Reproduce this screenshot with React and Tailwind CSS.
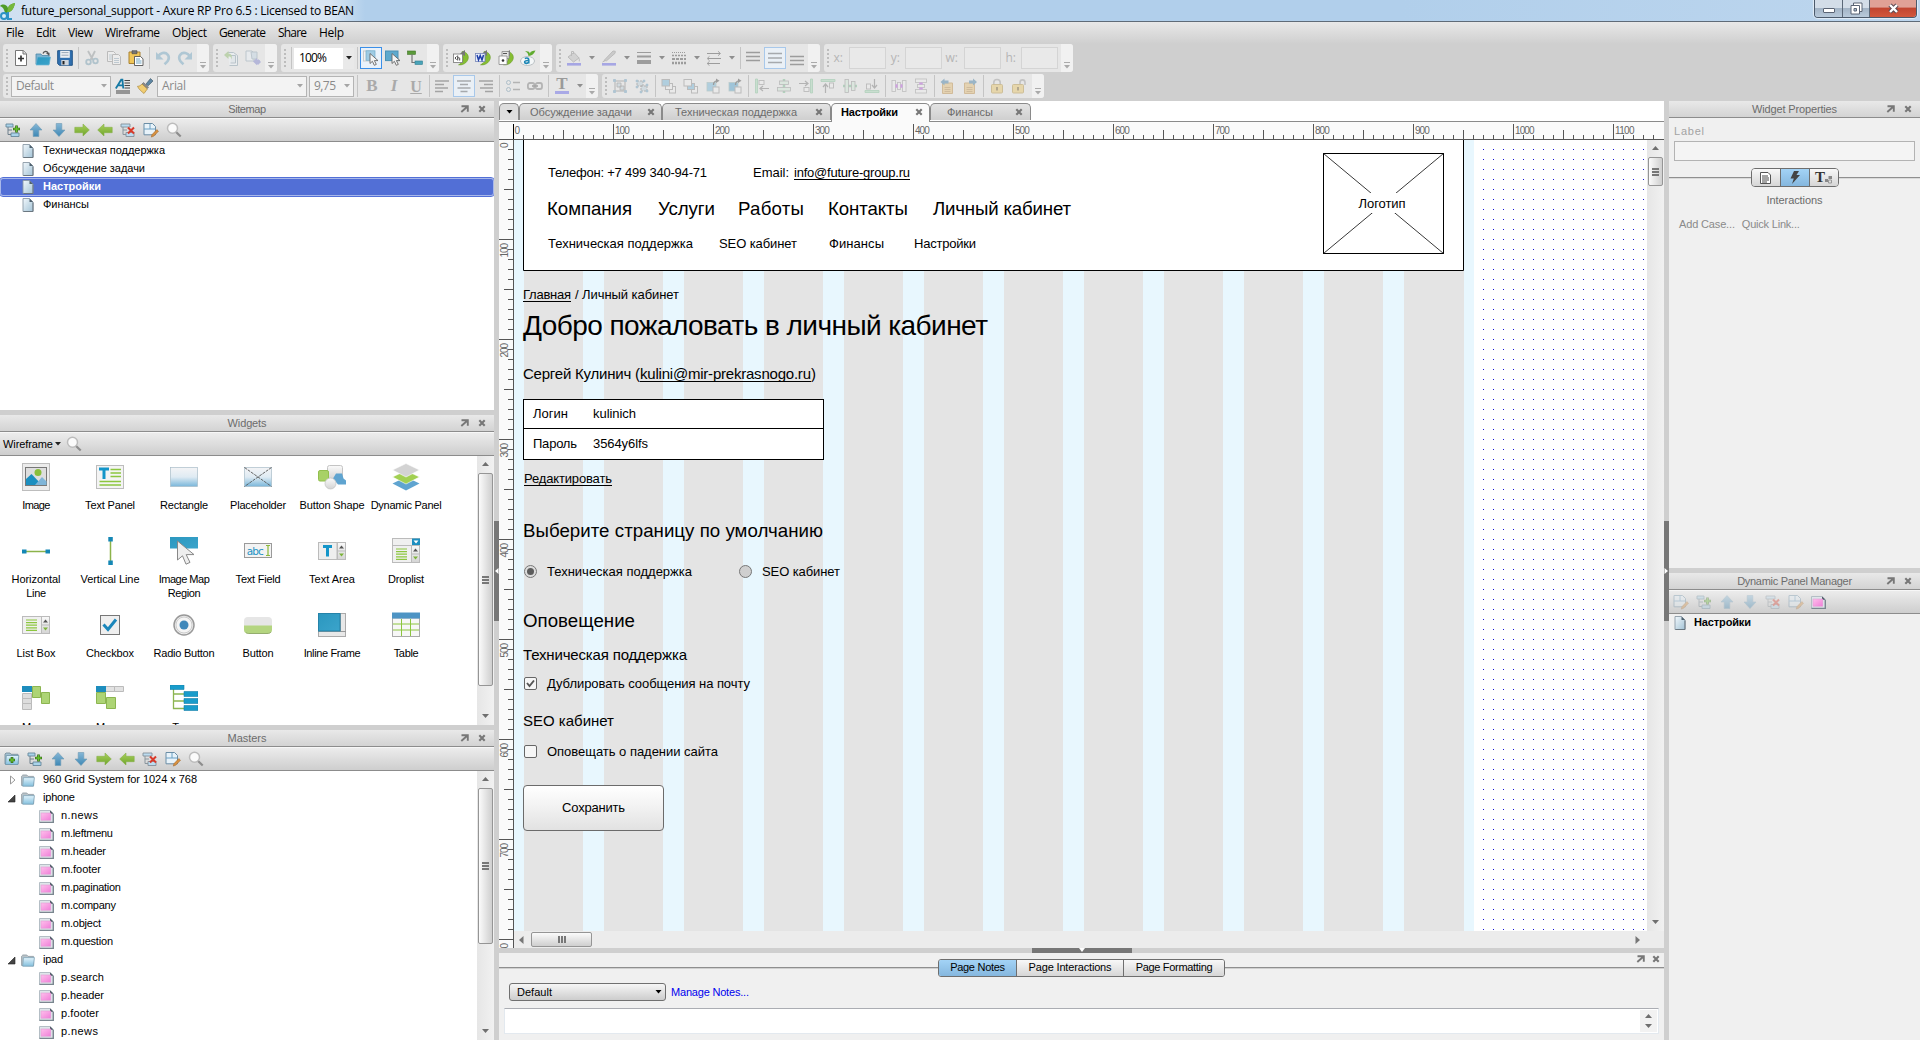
import React, { useLayoutEffect, useRef, useState } from "react";

/* Text whose tracking is adjusted so that it occupies a given width. */
function F({ w, className = "", children }) {
  const ref = useRef(null);
  const [ls, setLs] = useState(0);
  useLayoutEffect(() => {
    const el = ref.current;
    const n = el.textContent.length;
    if (w && n > 1) setLs((w - el.getBoundingClientRect().width) / (n - 1));
  }, []);
  return (
    <span ref={ref} className={"inline-block whitespace-pre " + className} style={{ letterSpacing: ls + "px" }}>
      {children}
    </span>
  );
}

const S = ({ w = 16, h = 16, vb, className = "", children }) => (
  <svg width={w} height={h} viewBox={vb || `0 0 ${w} ${h}`} className={"block shrink-0 " + className} fill="none">
    {children}
  </svg>
);

/* ---------- small glyphs ---------- */
const Down = ({ c = "#222", w = 6 }) => (
  <S w={w} h={4} vb="0 0 6 4"><path d="M0 0h6L3 3.6z" fill={c} /></S>
);
const CloseX = () => (
  <S w={8} h={8}><path d="M1.3 1.3l5.4 5.4M6.7 1.3L1.3 6.7" stroke="#777" strokeWidth="2.1" /></S>
);
const PopOut = () => (
  <S w={9} h={8}><path d="M1.5 1.2h6.3v5.6M7.5 1.5L1.3 7" stroke="#777" strokeWidth="1.9" /></S>
);

/* ---------- shared icons ---------- */
const Defs = () => (
  <svg width="0" height="0" className="absolute">
    <defs>
      <linearGradient id="gBlue" x1="0" y1="0" x2="0" y2="1"><stop offset="0" stopColor="#86b7d6" /><stop offset="1" stopColor="#3e88b5" /></linearGradient>
      <linearGradient id="gGreen" x1="0" y1="0" x2="0" y2="1"><stop offset="0" stopColor="#a9d05c" /><stop offset="1" stopColor="#6fa52c" /></linearGradient>
      <linearGradient id="gPage" x1="0" y1="0" x2="1" y2="1"><stop offset="0" stopColor="#f2f8fc" /><stop offset="1" stopColor="#a3c3d6" /></linearGradient>
      <linearGradient id="gFold" x1="0" y1="0" x2="0" y2="1"><stop offset="0" stopColor="#e2f3fb" /><stop offset="1" stopColor="#84c0de" /></linearGradient>
      <linearGradient id="gPink" x1="0" y1="0" x2="1" y2="1"><stop offset="0" stopColor="#ffc0ec" /><stop offset="1" stopColor="#f07fd8" /></linearGradient>
      <linearGradient id="gRect" x1="0" y1="0" x2="0" y2="1"><stop offset="0" stopColor="#f4f4f6" /><stop offset=".5" stopColor="#dfebf3" /><stop offset="1" stopColor="#79b6da" /></linearGradient>
      <linearGradient id="gGray" x1="0" y1="0" x2="0" y2="1"><stop offset="0" stopColor="#fafafa" /><stop offset="1" stopColor="#d4d4d4" /></linearGradient>
      <linearGradient id="gCyan" x1="0" y1="0" x2="1" y2="1"><stop offset="0" stopColor="#2b97bf" /><stop offset="1" stopColor="#3ba4cb" /></linearGradient>
    </defs>
  </svg>
);
const Page = () => (
  <S w={12} h={14}><path d="M1 .5h6.5l3.5 3.5v9.5H1z" fill="url(#gPage)" stroke="#8b9aa6" strokeWidth=".9" /><path d="M7.5 .5V4H11z" fill="#50626f" /><path d="M11 4.5v9H1.5" stroke="#6b7780" /></S>
);
const Master = () => (
  <S w={15} h={13}><path d="M.5 .5h10.7l3.2 3v9H.5z" fill="#dfe6ea" stroke="#b4bec5" /><path d="M11 .5v3.2h3.5z" fill="#44525c" /><path d="M14.3 4v8.5H.5" stroke="#7b8790" strokeWidth="1.4" /><rect x="2" y="3" width="9.8" height="7.2" fill="url(#gPink)" stroke="#e29bd4" strokeWidth=".6" /></S>
);
const Folder = () => (
  <S w={14} h={13}><path d="M.6 11.5V2.2L1.8 1h4l1.2 1.4h5.6v9.4z" fill="#b9c3c9" stroke="#949fa6" strokeWidth=".9" /><path d="M2.4 3.6h11l-1 8.6H1.7z" fill="url(#gFold)" stroke="#7fa3b6" strokeWidth=".8" /></S>
);
const AddNode = () => (
  <S><path d="M1 2h7v3H1zM6 11h8v3.5H6z" fill="#a9d3ea" stroke="#66889c" strokeWidth=".9" /><path d="M3 5v7.5h3M3 8h4" stroke="#6d7f8b" /><path d="M11.5 3.5v7M8 7h7" stroke="#2c5f12" strokeWidth="2.6" /><path d="M11.5 4v6M8.5 7h6" stroke="#66c12c" strokeWidth="1.3" /></S>
);
const DelNode = () => (
  <S><path d="M1 2h9v3H1zM6 10.5h8v4H6z" fill="#bcdcf0" stroke="#84909a" strokeWidth=".9" /><path d="M3 5v7.5h3M3 8h4" stroke="#8a959d" /><path d="M8 5.5l6 6M14 5.5l-6 6" stroke="#d93a2a" strokeWidth="2" /></S>
);
const AddFolder = () => (
  <S><path d="M1 3l1-1h4l1 1.3h7V13H1z" fill="#a5c2d2" stroke="#7b919e" strokeWidth=".9" /><path d="M2.3 4.5h12.5L14 13.5H1.5z" fill="url(#gFold)" stroke="#6f94a8" strokeWidth=".8" /><path d="M8 6v6M5 9h6" stroke="#2c5f12" strokeWidth="2.6" /><path d="M8 6.5v5M5.5 9h5" stroke="#66c12c" strokeWidth="1.3" /></S>
);
const Up = () => <S><path d="M8 1.5L14 8h-3.2v6.5H5.2V8H2z" fill="url(#gBlue)" stroke="#6e9bb4" strokeWidth=".6" /></S>;
const Dn = () => <S><path d="M8 14.5L14 8h-3.2V1.5H5.2V8H2z" fill="url(#gBlue)" stroke="#6e9bb4" strokeWidth=".6" /></S>;
const Rt = () => <S><path d="M15.3 8L9 2v3.3H.8v5.4H9V14z" fill="url(#gGreen)" stroke="#86b04a" strokeWidth=".6" /></S>;
const Lt = () => <S><path d="M.7 8L7 2v3.3h8.2v5.4H7V14z" fill="url(#gGreen)" stroke="#86b04a" strokeWidth=".6" /></S>;
const EditPg = () => (
  <S><path d="M1 1.5h8.5l3 3v8.3H1z" fill="#e8f3fa" stroke="#6b8ea6" /><path d="M1 7h11M7 2v5" stroke="#6ba0c4" /><path d="M9 12.6l4.8-5 1.7 1.6-4.8 5-2.4.9z" fill="#d89242" stroke="#9b5e22" strokeWidth=".5" /></S>
);
const Search = () => (
  <S><circle cx="6.5" cy="6.3" r="5" fill="#fbfbfb" stroke="#bcbcbc" strokeWidth="1.5" /><path d="M10.3 10.2l4.4 4.3" stroke="#8d8d8d" strokeWidth="2.2" /></S>
);

/* ---------- toolbar icons ---------- */
const New = () => <S><path d="M2.5 .5h7.8l3.2 3.2v11.8h-11z" fill="#fff" stroke="#777" /><path d="M10 .5v3.5h3.5" stroke="#777" fill="#ddd" /><path d="M8 5.5v6M5 8.5h6" stroke="#333" strokeWidth="1.7" /></S>;
const Open = () => <S><path d="M1 14V4h5l1 1.5h7V14z" fill="#7fb3d0" stroke="#4d88a8" strokeWidth=".8" /><path d="M2.5 7h13L14 15H1z" fill="url(#gCyan)" stroke="#6db4d4" strokeWidth=".7" /><path d="M8 3.4C9 1 12 .6 13 3" stroke="#555" strokeWidth="1.3" /><path d="M10.5 2.7h4V6z" fill="#555" /></S>;
const Save = () => <S><path d="M.7 .7h14.6v14.6H2.4L.7 13.6z" fill="#3070b0" stroke="#235588" /><path d="M3.2 .8h9.6v7H3.2z" fill="#eef0f3" /><path d="M4.5 2.6h7M4.5 5.2h7" stroke="#9aa8b8" /><path d="M4.3 10h7.4v5.2H4.3z" fill="#cfd5dc" /><path d="M5.5 11h2v3.4h-2z" fill="#222" /></S>;
const Cut = () => <S><path d="M4 1l5 9M11 1L6.5 10" stroke="#8c9396" strokeWidth="1.8" /><circle cx="4.5" cy="12" r="2.3" stroke="#7199ad" strokeWidth="1.8" /><circle cx="11.5" cy="11" r="2.3" stroke="#7199ad" strokeWidth="1.8" /></S>;
const Copy = () => <S><path d="M1.5 1.5h6l2 2v8h-8z" fill="#f5f5f5" stroke="#888" /><path d="M6.5 4.5h6l2 2v8h-8z" fill="#f5f5f5" stroke="#888" /><path d="M8 8.5h5M8 10.5h5M8 12.5h5M3 5h3M3 7h3M3 9h3" stroke="#8fa8b8" /></S>;
const Paste = () => <S><path d="M1 2h11v11.5H1z" fill="#f0c659" stroke="#a98232" /><path d="M4 .7h5v3H4z" fill="#777" stroke="#444" strokeWidth=".6" /><path d="M6.5 6.5h6l2.5 2.3v6.7H6.5z" fill="#fff" stroke="#555" strokeWidth=".9" /><path d="M8 9h4M8 11h5.5M8 13h5.5" stroke="#6fa6c4" /></S>;
const Undo = () => <S><path d="M3 7C5 2.8 10 1.4 12.8 4.8c2.2 3 .4 6.4-3.3 9.4" stroke="#6da2bf" strokeWidth="2.6" /><path d="M1 2v7.5h7.5z" fill="#6da2bf" /></S>;
const Redo = () => <S className="-scale-x-100"><path d="M3 7C5 2.8 10 1.4 12.8 4.8c2.2 3 .4 6.4-3.3 9.4" stroke="#6da2bf" strokeWidth="2.6" /><path d="M1 2v7.5h7.5z" fill="#6da2bf" /></S>;
const PageUndo = () => <S><path d="M4.5 2.5h6l4 3v10h-8" fill="#eef4f8" stroke="#8299a8" /><path d="M8 5.5h4.5v7.5h-5" fill="#dbe6ee" stroke="#8299a8" /><path d="M1 5l4.5-4v2.4C9 3.6 9.6 7 8 9.5 8.3 6.7 7.6 6.4 5.5 6.4V9z" fill="#8dba6b" /></S>;
const PageOut = () => <S><path d="M1 1h6l2 2v8H1z" fill="#eaf1f6" stroke="#8aa0b0" /><path d="M6 2h6v7H7z" fill="#bfd3e3" stroke="#8aa0b0" /><path d="M8 11.5l4-3.6v2.3h3v2.7h-3v2.3z" fill="#7a7fca" /><path d="M10 12l3 3 3-3-3-3z" fill="#7c80cb" /></S>;
const Cursor = ({ x = 0, y = 0 }) => <path transform={`translate(${x} ${y})`} d="M0 0v10l2.4-2.2 1.9 4 2-.9-1.9-3.8H8z" fill="#f5f5f5" stroke="#666" strokeWidth=".9" />;
const SelA = () => <S><rect x=".5" y="1" width="7" height="10" fill="#f2f2f2" stroke="#ccc" /><rect x="3" y=".8" width="9" height="9.5" fill="#9fcbe3" stroke="#6fabca" strokeWidth=".7" /><Cursor x={7} y={3.5} /></S>;
const SelB = () => <S><rect x=".5" y="1" width="12.5" height="9.6" fill="#5ea9cd" stroke="#4a92b6" /><Cursor x={7} y={3.5} /></S>;
const Conn = () => <S><rect x=".5" y="1" width="8" height="3.4" fill="#5b9a3a" stroke="#417426" strokeWidth=".6" /><path d="M5 4.6v7.9h3" stroke="#777" strokeWidth="1.2" /><rect x="8" y="11" width="7.5" height="3.5" fill="#4aa3b8" stroke="#2f7f92" strokeWidth=".6" /></S>;
const GreenSwirl = () => <><path d="M9 1.500c6 .5 7.500 5.500 5.500 9C12.500 14 9 15.300 5.500 14.800 9.500 13 11 10 9.500 6z" fill="#86bd33" stroke="#5c9319" strokeWidth=".5" /><path d="M7 3.500L12 0v6z" fill="#777" /></>;
const Html = () => <S><GreenSwirl /><rect x=".5" y="4" width="9" height="8.5" fill="#fff" stroke="#777" strokeWidth=".8" /><path d="M3.500 6.500L2 8l1.500 1.700M4.700 5.500v5M4.700 8.300c1-1 2-.8 2 .3v1.900" stroke="#333" strokeWidth=".9" /></S>;
const Word = () => <S><GreenSwirl /><rect x=".5" y="3.500" width="9.500" height="8" fill="#e9eefb" stroke="#7586b8" strokeWidth=".8" /><path d="M2 5l1.500 5 1.700-4.500L7 10 8.500 5" stroke="#1f3fa8" strokeWidth="1.500" /></S>;
const Print = () => <S><GreenSwirl /><path d="M4 1.500h7v7H4z" fill="#e5e5e5" stroke="#888" strokeWidth=".8" /><path d="M1 6h8v8.500H1z" fill="#fdfdfd" stroke="#888" strokeWidth=".8" /><circle cx="5" cy="10.500" r="1.300" fill="#333" /><path d="M5 3.500h4" stroke="#555" /></S>;
const AxShare = () => <S><ellipse cx="7.500" cy="11" rx="7" ry="4.500" fill="#f4f7f8" stroke="#a4acb0" strokeWidth=".7" /><path d="M8.500 6C8 3 6.800 2 5 1.600 8 .8 9.400 2 9.800 3.400 10.600 1.400 12.800.6 15.500.5 14 4 12 5.800 8.500 6z" fill="#5fab2e" /><path d="M4.800 8.400c3-1 4 .2 4 1.600V13.400M8.800 10.600c-2.600-.2-4.300.4-4.200 1.600.2 1.600 3.200 1.500 4.200-.2" stroke="#1c86b5" strokeWidth="1.600" /></S>;
const Bucket = () => <S><path d="M2 7l6-4.500L13 8l-5.500 4z" fill="#bbb" stroke="#888" /><path d="M5.500 6V1.500h2V4" stroke="#888" /><path d="M13 7c1 2 1.500 3.500.6 4.500-.8.3-1-.5-.9-2z" fill="#999" /><rect x="1" y="13" width="14" height="2.600" fill="#5a5ae0" /></S>;
const Pen = () => <S><path d="M3 10.500L12 1l2.300.3-.3 2-8.500 7.500z" fill="#aaa" stroke="#888" /><path d="M1.500 12l3-1.500" stroke="#888" /><rect x="1" y="13" width="14" height="2.600" fill="#5a5ae0" /></S>;
const Weights = () => <S><path d="M1 2.500h14" stroke="#444" /><path d="M1 6.500h14" stroke="#444" strokeWidth="2" /><path d="M1 12h14" stroke="#444" strokeWidth="4" /></S>;
const Dashes = () => <S><path d="M1 2.500h14" stroke="#444" strokeDasharray="1 1" /><path d="M1 5.500h14" stroke="#444" strokeWidth="1.500" strokeDasharray="2 1" /><path d="M1 9h14" stroke="#444" strokeWidth="2" strokeDasharray="3 1" /><path d="M1 13h14" stroke="#444" strokeWidth="2.500" strokeDasharray="2 1" /></S>;
const Arrows = () => <S><path d="M1 3.500h13M2 8.500h13M1 13.500h13" stroke="#444" /><path d="M3.500 6.300L1.200 8.500l2.300 2.200M12 1.300l2.500 2.200L12 5.700M3.500 11.300l-2.300 2.200 2.300 2.200" stroke="#555" /></S>;
const VTop = () => <S><path d="M1 2.500h14M1 6.500h14M1 10.500h14" stroke="#444" strokeWidth="1.400" /></S>;
const VMid = () => <S><path d="M1 3.500h14M1 8h14M1 12.500h14" stroke="#555" strokeWidth="1.400" /></S>;
const VBot = () => <S><path d="M1 6.500h14M1 10.500h14M1 14.500h14" stroke="#444" strokeWidth="1.400" /></S>;
const StyleA = () => <S><path d="M9.500 2.500H15M9.500 5H15M9.500 7.500H15M9.500 10H15M1 13h14M1 15h14" stroke="#444" /><path d="M.8 10.500L6.200 1.700h1.200l.9 8.800M3 7.300h4.800" stroke="#1679a4" strokeWidth="1.800" /></S>;
const Brush = () => <S><path d="M9 6l4.500-5.500L16 3l-4.800 4.800z" fill="#5e86a3" stroke="#3c5563" strokeWidth=".6" /><path d="M6.500 4.500l5 4.700-1.400 1.600L5 6z" fill="#8b8b8b" stroke="#555" strokeWidth=".5" /><path d="M5 6l5.300 5L7 15.500C4.500 13.500 1.500 11 .5 8.300 2.300 8.300 3.800 7.400 5 6z" fill="#f1cd72" stroke="#a57f2c" strokeWidth=".6" /></S>;
const AlL = () => <S><path d="M1 3h14M1 6.500h9M1 10h13M1 13.500h8" stroke="#555" strokeWidth="1.500" /></S>;
const AlC = () => <S><path d="M1 3h14M4 6.500h8M1.500 10h13M4.500 13.500h7" stroke="#555" strokeWidth="1.500" /></S>;
const AlR = () => <S><path d="M1 3h14M6 6.500h9M2 10h13M7 13.500h8" stroke="#555" strokeWidth="1.500" /></S>;
const List = () => <S><circle cx="3.500" cy="4.500" r="2" stroke="#6b8fa6" /><circle cx="3.500" cy="11.500" r="2" stroke="#6b8fa6" /><path d="M8 4.500h7M8 11.500h7" stroke="#777" strokeWidth="1.300" /></S>;
const Link = () => <S><rect x=".9" y="5" width="6.500" height="6" rx="2" stroke="#777" strokeWidth="1.800" /><rect x="8.500" y="5" width="6.500" height="6" rx="2" stroke="#777" strokeWidth="1.800" /><path d="M5 8h6" stroke="#555" strokeWidth="1.600" /></S>;
const Group = () => <S><path d="M3 3h10v10H3z" stroke="#777" /><path d="M5 5h4v4H5zM8 8h4v4H8z" fill="#b9cdd8" stroke="#777" strokeWidth=".8" /><path d="M1.500 1.500h2v2h-2zM12.500 1.500h2v2h-2zM1.500 12.500h2v2h-2zM12.500 12.500h2v2h-2z" fill="#6f9fbb" stroke="#6f9fbb" /></S>;
const Ungroup = () => <S><path d="M3 3h6v5H3zM7 8h6v5H7z" fill="#b9cdd8" stroke="#777" strokeDasharray="2 1" /><path d="M2 2h2v2H2zM9 2h2v2H9zM2 8h2v2H2zM12 6h2v2h-2zM12 12h2v2h-2zM6 13h2v2H6z" fill="#6f9fbb" stroke="#6f9fbb" strokeWidth=".5" /></S>;
const Stack = ({ a = "#6fb3d6", b = "#eee", c = "#eee" }) => <S><rect x="8.500" y="8.500" width="6" height="6.500" fill={c} stroke="#888" /><rect x="4.500" y="5.500" width="7" height="6" fill={b} stroke="#888" /><rect x="1" y="1.500" width="7.500" height="6.500" fill={a} stroke="#888" /></S>;
const StackArrow = ({ f }) => <S><rect x="2" y="4.500" width="9" height="8.500" fill={f} stroke="#8aa" strokeWidth=".8" /><rect x="8" y="9" width="6" height="6" fill="#eee" stroke="#888" /><path d="M8.500 7c0-3 1-4 3.500-4.200" stroke="#444" strokeWidth="1.300" /><path d="M11 .5l3.500 2.300L11 5z" fill="#444" /></S>;
const AlignO = ({ r = 0, m = 0 }) => (
  <S><g transform={`rotate(${r} 8 8)`}>{m ? <><path d="M8 1v14" stroke="#74b98c" strokeWidth="2.500" /><rect x="3.500" y="3" width="9" height="3.500" fill="#cfe6d6" stroke="#888" strokeWidth=".8" /><rect x="1.500" y="9.500" width="13" height="3.500" fill="#cfe6d6" stroke="#888" strokeWidth=".8" /></> : <><path d="M1.500 1h2v14h-2z" fill="#a7d6b5" stroke="#74b98c" strokeWidth=".8" /><rect x="5" y="2.500" width="5" height="4" fill="#eee" stroke="#888" strokeWidth=".9" /><path d="M15 10.500H6M9 8l-3 2.500L9 13" stroke="#777" strokeWidth="1.200" /></>}</g></S>
);
const Dist = ({ r = 0 }) => <S><g transform={`rotate(${r} 8 8)`}><rect x="1" y="2.500" width="3.500" height="11" fill="#eee" stroke="#999" strokeWidth=".9" /><rect x="6.500" y="4.500" width="3" height="7" fill="#eee" stroke="#999" strokeWidth=".9" /><rect x="11.500" y="2.500" width="3.500" height="11" fill="#eee" stroke="#999" strokeWidth=".9" /><path d="M4.500 8h2M9.500 8h2" stroke="#b34ddb" strokeWidth="3.500" /></g></S>;
const Note = ({ flip }) => <S><path d="M2.500 5h10v10.500h-10z" fill="#e3bb72" stroke="#b8893f" /><path d="M4.500 9.500h6M4.500 11.500h6M4.500 13.500h6" stroke="#a87c3a" strokeWidth=".8" />{flip ? <path d="M15 4L11 .5v2H7v3h4v2z" fill="#3f7ba3" /> : <path d="M.5 4l4-3.500v2h4v3h-4v2z" fill="#3f7ba3" />}</S>;
const Lock = ({ o }) => <S>{o ? <path d="M9 7V4.500c0-3.500 5-3.500 5 0V7" stroke="#999" strokeWidth="1.600" /> : <path d="M4.800 7V4.500c0-4 6.400-4 6.400 0V7" stroke="#999" strokeWidth="1.600" />}<rect x={o ? 1.5 : 2.5} y="6.500" width="11" height="8.500" rx="1" fill="#e8c465" stroke="#b18f3c" /><path d={o ? "M7 9v3.500" : "M8 9v3.500"} stroke="#6a5421" strokeWidth="1.800" /></S>;

/* ---------- toolbar parts ---------- */
const Bar = ({ children }) => <div className="flex h-full items-center rounded-[3px] bg-[#e6e6e6]">{children}</div>;
const Grip = () => (
  <div className="flex h-full w-[7px] shrink-0 flex-col items-end justify-center gap-[2px] pr-[2px]">
    {[0, 1, 2, 3, 4].map((i) => <i key={i} className="h-[2px] w-[2px] bg-[#bdbdbd]" />)}
  </div>
);
const Cap = ({ className = "" }) => (
  <div className={"flex h-full w-3 shrink-0 flex-col items-center justify-end gap-[2px] rounded-r-[3px] bg-[#f1f1f1] pb-[3px] " + className}>
    <i className="h-px w-[6px] bg-[#aaa]" />
    <Down c="#aaa" />
  </div>
);
const C = ({ dis, sel, children, className = "" }) => (
  <div className={"flex h-[22px] w-[22px] shrink-0 items-center justify-center " + (sel === 1 ? "border border-[#3b8fe8] bg-[#e9f2fb] " : sel === 2 ? "border border-[#a8c8ea] bg-[#eaf0f6] " : "") + className}>
    <div className={dis ? "opacity-45" : ""}>{children}</div>
  </div>
);
const Sep = ({ className = "w-[5px]" }) => (
  <div className={"flex h-[22px] shrink-0 justify-center " + className}><i className="h-full w-px bg-[#c4c4c4]" /></div>
);
const SplitBtn = ({ children }) => (
  <div className="flex w-[35px] shrink-0 items-center"><C dis>{children}</C><div className="flex w-[13px] justify-center opacity-60"><Down c="#555" /></div></div>
);
const Combo = ({ className, w, children }) => (
  <div className={"flex h-[21px] shrink-0 items-center justify-between border border-[#b4b4b4] bg-[#f3f3f3] pl-1 pr-[3px] text-[12px] leading-none text-[#8a8a8a] " + className}>
    <F w={w}>{children}</F><Down c="#a5a5a5" />
  </div>
);
const Coord = ({ l, className }) => (
  <div className="flex items-center"><span className={"text-right text-[12px] text-[#b5b5b5] " + className}>{l}</span><i className="h-[22px] w-[37px] border border-[#d4d4d4] bg-[#e9e9e9]" /></div>
);

function Toolbars() {
  return (
    <div className="flex h-[57px] shrink-0 flex-col gap-[2px] bg-[#cfcfcf] pl-[3px] font-['Open_Sans','Noto_Sans',sans-serif]">
      <div className="flex h-7 shrink-0 gap-1">
        <Bar><Grip /><C><New /></C><C><Open /></C><C><Save /></C><Sep /><C dis><Cut /></C><C dis><Copy /></C><C><Paste /></C><Sep /><C dis><Undo /></C><C dis><Redo /></C><Cap className="ml-px" /></Bar>
        <Bar><Grip /><C dis><PageUndo /></C><C dis><PageOut /></C><Cap className="ml-px" /></Bar>
        <Bar>
          <Grip /><Sep className="w-[6px]" />
          <div className="flex h-[21px] w-[60px] items-center justify-between bg-white pl-[5px] text-[12px] text-black"><F w={28}>100%</F><div className="flex h-full w-[11px] items-center justify-center bg-[#e9e9e9]"><Down /></div></div>
          <Sep className="w-[6px]" /><C sel={1}><SelA /></C><C><SelB /></C><C><Conn /></C><Cap className="ml-px" />
        </Bar>
        <Bar><Grip /><C><Html /></C><C><Word /></C><C className="ml-px"><Print /></C><C><AxShare /></C><Cap className="ml-px" /></Bar>
        <Bar><Grip /><SplitBtn><Bucket /></SplitBtn><SplitBtn><Pen /></SplitBtn><SplitBtn><Weights /></SplitBtn><SplitBtn><Dashes /></SplitBtn><SplitBtn><Arrows /></SplitBtn><Sep className="w-[4px]" /><C dis><VTop /></C><C dis sel={2}><VMid /></C><C dis><VBot /></C><Cap /></Bar>
        <Bar><Grip /><Coord l="x:" className="w-[18px] pr-[6px]" /><Coord l="y:" className="w-[19px] pr-[5px]" /><Coord l="w:" className="w-[22px] pr-[6px]" /><Coord l="h:" className="w-[20px] pr-[5px]" /><Cap className="ml-[3px]" /></Bar>
      </div>
      <div className="flex h-6 shrink-0 gap-1">
        <Bar>
          <Grip /><Combo className="ml-px w-[100px]" w={38}>Default</Combo><C className="ml-px"><StyleA /></C><C><Brush /></C>
          <Combo className="ml-px w-[150px]" w={24}>Arial</Combo><Combo className="ml-[2px] w-[45px]" w={22}>9,75</Combo><Sep className="w-[7px]" />
          <C><b className="font-['Liberation_Serif',serif] text-[17px] text-[#aaa]">B</b></C>
          <C><b className="font-['Liberation_Serif',serif] text-[17px] italic text-[#aaa]">I</b></C>
          <C><b className="font-['Liberation_Serif',serif] text-[16px] text-[#aaa] underline">U</b></C>
          <Sep className="w-[4px]" /><C dis><AlL /></C><C dis sel={2}><AlC /></C><C dis><AlR /></C><Sep /><C dis><List /></C><C dis><Link /></C><Sep />
          <div className="flex h-[22px] w-[22px] flex-col items-center justify-end pb-[3px]"><b className="font-['Liberation_Serif',serif] text-[17px] leading-[14px] text-[#9a9a9a]">T</b><i className="h-[3px] w-[14px] bg-[#a9a9e6]" /></div>
          <div className="flex w-[13px] justify-center opacity-60"><Down c="#555" /></div><Cap />
        </Bar>
        <Bar>
          <Grip /><C dis><Group /></C><C dis><Ungroup /></C><Sep />
          <C dis><Stack /></C><C dis><Stack a="#eee" b="#6fb3d6" /></C><C dis><StackArrow f="#6fb3d6" /></C><C dis><StackArrow f="#4b9cc8" /></C><Sep />
          <C dis><AlignO /></C><C dis><AlignO m={1} /></C><C dis><AlignO r={180} /></C><C dis><AlignO r={90} /></C><C dis><AlignO m={1} r={90} /></C><C dis><AlignO r={270} /></C><Sep />
          <C dis><Dist /></C><C dis><Dist r={90} /></C><Sep /><C dis><Note /></C><C dis><Note flip /></C><Sep /><C dis><Lock /></C><C dis><Lock o /></C><Cap className="ml-[2px]" />
        </Bar>
      </div>
    </div>
  );
}

/* ---------- panels ---------- */
const Head = ({ t, w }) => (
  <div className="flex h-[17px] shrink-0 items-center border-b border-[#8c8c8c] bg-gradient-to-b from-[#e9e9e9] to-[#d3d3d3] pr-2">
    <div className="flex flex-1 justify-center pl-[34px] text-[11px] leading-none text-[#6c6c6c]"><F w={w}>{t}</F></div>
    <div className="flex items-center gap-[9px]"><PopOut /><CloseX /></div>
  </div>
);
const Tools = ({ children, className = "" }) => (
  <div className={"flex h-6 shrink-0 items-center border-b border-[#8c8c8c] bg-gradient-to-b from-[#ececec] to-[#cecece] " + className}>{children}</div>
);
const T = ({ children, dis }) => <div className={"flex w-[23px] justify-center " + (dis ? "opacity-35" : "")}>{children}</div>;

const Tri = ({ up }) => <S w={7} h={4} className={up ? "rotate-180" : ""}><path d="M0 0h7L3.5 4z" fill="#6f6f6f" /></S>;
const VScroll = ({ thumb, className = "" }) => (
  <div className={"flex w-[17px] shrink-0 flex-col items-center bg-gradient-to-r from-[#e6e6e6] to-[#f1f1f1] pb-[7px] pt-[6px] " + className}>
    <Tri up />
    <div className={"mt-[7px] flex w-[15px] flex-col items-center justify-center gap-px rounded-[2px] border border-[#959595] bg-gradient-to-r from-[#fbfbfb] to-[#cfcfcf] " + thumb}>
      {[0, 1, 2].map((i) => <i key={i} className="h-[2px] w-[7px] bg-[#777]" />)}
    </div>
    <div className="mt-auto"><Tri /></div>
  </div>
);

const SITE = [["Техническая поддержка", 122], ["Обсуждение задачи", 102], ["Настройки", 58], ["Финансы", 46]];

/* widget icons, drawn on a 28px grid */
const W = ({ children }) => <S w={28} h={28}>{children}</S>;
const ListLines = ({ x, y, n = 5, w = 11 }) => <path d={Array.from({ length: n }, (_, i) => `M${x} ${y + i * 2.6}h${w}`).join("")} stroke="#8cc63f" strokeWidth="1.2" />;
const Spin = ({ x, y, h = 18 }) => <><rect x={x} y={y} width="8" height={h} fill="url(#gGray)" stroke="#bbb" /><path d={`M${x} ${y + h / 2}h8`} stroke="#bbb" /><path d={`M${x + 1.5} ${y + h / 2 - 2.5}l2.5-3 2.5 3z`} fill="#555" /><path d={`M${x + 1.5} ${y + h / 2 + 2.5}l2.5 3 2.5-3z`} fill="#7db33a" /></>;
const WI = {
  image: <W><rect x=".5" y=".5" width="27" height="27" fill="#ececec" stroke="#bdbdbd" /><rect x="3.5" y="4.5" width="21" height="18" fill="#dedede" stroke="#777" /><circle cx="16" cy="9.5" r="3.5" fill="#8abf3c" /><path d="M4 22v-6l5.5-5L20 22z" fill="#1b8fc0" /><path d="M13 22l7-8 4.5 4.5V22z" fill="#7fb5d8" /></W>,
  text: <W><rect x=".5" y="2.5" width="27" height="23" fill="#f4f4f4" stroke="#bdbdbd" /><path d="M3 6h10M8 6v10" stroke="#1495c9" strokeWidth="3" /><path d="M14.5 6.5H25M14.5 10H25M14.5 13.5H25M3.5 18.5H25M3.5 22H25" stroke="#8cc63f" strokeWidth="1.3" /></W>,
  rect: <W><rect x=".5" y="4.5" width="27" height="19" fill="url(#gRect)" stroke="#a9bcc8" strokeWidth=".7" /></W>,
  ph: <W><rect x=".5" y="4.5" width="27" height="19" fill="url(#gRect)" stroke="#a9bcc8" strokeWidth=".7" /><path d="M.5 4.5l27 19M27.5 4.5l-27 19" stroke="#555" strokeWidth=".9" strokeDasharray="3 1" /></W>,
  shape: <W><rect x="9.5" y="2.5" width="15" height="14" rx="2" fill="url(#gGray)" stroke="#c4c4c4" /><rect x=".5" y="7.5" width="10" height="10.5" rx="1.5" fill="#a8d166" stroke="#92bf4e" /><path d="M18 10.5h6l1.5 5 2.5 2v4h-8l-5-6z" fill="#5fa4d0" /><circle cx="12.5" cy="20.5" r="5.5" fill="url(#gGray)" stroke="#c0c0c0" strokeWidth=".7" /></W>,
  dyn: <W><path d="M14 14l13.5 6.5L14 27.5.5 20.5z" fill="#5fa4d0" /><path d="M14 7.5L27.5 14 14 21 .5 14z" fill="#a2d052" stroke="#fff" strokeWidth=".6" /><path d="M14 .5L27.5 7 14 14 .5 7z" fill="#d3d3d3" stroke="#fff" strokeWidth=".6" /></W>,
  hl: <W><path d="M2 14.5h24" stroke="#8cb34a" strokeWidth="1.5" /><path d="M0 12.5h4.5v4H0zM23.5 12.5H28v4h-4.5z" fill="#1587b5" /></W>,
  vl: <W><path d="M14.5 2v24" stroke="#8cb34a" strokeWidth="1.5" /><path d="M12.3 0h4.5v4.5h-4.5zM12.3 23.5h4.5V28h-4.5z" fill="#1587b5" /></W>,
  map: <W><rect x="0" y="0" width="28" height="11.5" fill="url(#gCyan)" /><path d="M7.5 4v19l5-4.2 3.5 8.400 4-1.800-3.800-7.800H24z" fill="#eee" stroke="#888" /></W>,
  field: <W><rect x=".5" y="6.5" width="27" height="14" fill="#f3f3f3" stroke="#9a9a9a" /><text x="2.8" y="18" fontFamily="DejaVu Sans, sans-serif" fontSize="10.5" fill="#1f92c4" textLength="17">abc</text><path d="M22 8.5h4M24 8.5v10M22 18.5h4" stroke="#8cb93a" strokeWidth="1.2" /></W>,
  area: <W><rect x=".5" y="5.5" width="18.5" height="17" fill="#eee" stroke="#bbb" /><path d="M5 9.5h9M9.5 9.5v10" stroke="#1495c9" strokeWidth="3" /><Spin x={19.5} y={5.5} h={17} /></W>,
  drop: <W><rect x=".5" y="1.5" width="27" height="7" fill="#f0f0f0" stroke="#bbb" /><rect x="20" y="1.5" width="8" height="7" fill="#1e8fc0" /><path d="M21.5 3.5h5l-2.5 3z" fill="#fff" /><rect x=".5" y="8.5" width="19" height="17" fill="#f0f0f0" stroke="#bbb" /><ListLines x={4} y={12} /><Spin x={19.5} y={8.5} h={17} /></W>,
  list: <W><rect x=".5" y="5.5" width="19" height="17" fill="#f0f0f0" stroke="#bbb" /><ListLines x={4} y={9} /><Spin x={19.5} y={5.5} h={17} /></W>,
  check: <W><rect x="4.5" y="4.5" width="19" height="19" fill="#efefef" stroke="#777" /><path d="M7.5 13.5l4.5 5 8-10" stroke="#1a86bb" strokeWidth="3" /></W>,
  radio: <W><circle cx="14" cy="14" r="10" fill="#eee" stroke="#999" strokeWidth="1.5" /><circle cx="14" cy="14" r="8" fill="#f5f5f5" stroke="#ccc" /><circle cx="14" cy="14" r="4.5" fill="#3f88ba" /></W>,
  button: <W><rect x="0" y="6" width="28" height="16.5" rx="4" fill="#e6e6e6" /><path d="M0 14.5h28V18.5a4 4 0 01-4 4H4a4 4 0 01-4-4z" fill="#b4d580" /><path d="M2 21.5c1 1 2 1 3 1h18c2 0 3-.5 4-1.5" stroke="#94ad6e" /></W>,
  frame: <W><rect x=".5" y="2.5" width="27" height="23" fill="#e8e8e8" stroke="#aaa" /><path d="M22.5 2v18M0 20.5h28" stroke="#999" /><rect x=".5" y="2.5" width="21.5" height="17.5" fill="url(#gCyan)" stroke="#2583a9" /></W>,
  table: <W><rect x=".5" y="7" width="27" height="18.5" fill="#f7f7f7" stroke="#aaa" /><path d="M0 1.5h28v6H0z" fill="#4d94c4" /><path d="M9.5 8v17M18.5 8v17M1 13h26M1 19h26" stroke="#8cc63f" /></W>,
  menuV: <W><path d="M.5 8.5h9v5h-9zM.5 13.5h9v5h-9zM.5 18.5h9v6h-9z" fill="#ddd" stroke="#bbb" /><path d="M0 1h10v6H0z" fill="#1d8dbd" /><path d="M10.5 1.5h8v11h-8zM19.5 7.5h8v11h-8z" fill="#add475" stroke="#8cb550" /></W>,
  menuH: <W><path d="M9.5 1.5h9v5h-9zM18.5 1.5h9v5h-9z" fill="#e2e2e2" stroke="#bbb" /><path d="M0 1h10v6H0z" fill="#1d8dbd" /><path d="M.5 7.5h9v11h-9zM10.5 12.5h9v11h-9z" fill="#add475" stroke="#8cb550" /></W>,
  tree: <W><path d="M3.5 4v19.5H14M3.5 9H14M3.5 16H14" stroke="#8cb550" strokeWidth="1.3" /><path d="M0 0h14v4.5H0zM14 6.5h14v5H14zM14 13.5h14v5H14zM14 20.5h14v5H14z" fill="#189ccb" stroke="#1580a8" strokeWidth=".6" /></W>,
};
const WIDGETS = [
  ["image", ["Image"], [28]], ["text", ["Text Panel"], [50]], ["rect", ["Rectangle"], [48]], ["ph", ["Placeholder"], [56]], ["shape", ["Button Shape"], [65]], ["dyn", ["Dynamic Panel"], [71]],
  ["hl", ["Horizontal", "Line"], [49, 20]], ["vl", ["Vertical Line"], [59]], ["map", ["Image Map", "Region"], [51, 33]], ["field", ["Text Field"], [45]], ["area", ["Text Area"], [46]], ["drop", ["Droplist"], [36]],
  ["list", ["List Box"], [39]], ["check", ["Checkbox"], [48]], ["radio", ["Radio Button"], [61]], ["button", ["Button"], [31]], ["frame", ["Inline Frame"], [57]], ["table", ["Table"], [25]],
  ["menuV", ["Menu"], [28]], ["menuH", ["Menu"], [28]], ["tree", ["Tree"], [23]],
];
const MASTERS = [
  [0, "960 Grid System for 1024 x 768", 154, 0], [0, "iphone", 32, 1], [1, "n.news", 37], [1, "m.leftmenu", 52], [1, "m.header", 45], [1, "m.footer", 40], [1, "m.pagination", 60], [1, "m.company", 55], [1, "m.object", 40], [1, "m.question", 52],
  [0, "ipad", 20, 1], [1, "p.search", 43], [1, "p.header", 43], [1, "p.footer", 38], [1, "p.news", 37],
];

function Left() {
  return (
    <div className="flex h-[939px] w-[494px] shrink-0 flex-col bg-[#cfcfcf] text-[11px] text-black">
      <div className="flex h-[309px] shrink-0 flex-col bg-white">
        <Head t="Sitemap" w={38} />
        <Tools className="border-t border-t-[#f7f7f7]"><div className="w-px" /><T><AddNode /></T><T><Up /></T><T><Dn /></T><T><Rt /></T><T><Lt /></T><T><DelNode /></T><T><EditPg /></T><T><Search /></T></Tools>
        {SITE.map(([t, w], i) => (
          <div key={t} className={"flex h-[18px] shrink-0 items-center pl-[21px] " + (i === 2 ? "rounded-[3px] border border-[#a9b8ea] bg-[#526fd6] font-bold text-white outline outline-[#526fd6]" : "border border-transparent")}>
            <Page /><F w={w} className="mb-px ml-[9px] leading-none">{t}</F>
          </div>
        ))}
      </div>
      <div className="mt-[5px] flex h-[310px] shrink-0 flex-col bg-white">
        <Head t="Widgets" w={39} />
        <Tools className="border-t border-t-[#f7f7f7] pl-[3px]"><F w={50} className="leading-none">Wireframe</F><span className="ml-[2px] mr-[5px]"><Down /></span><Search /></Tools>
        <div className="flex h-[269px]">
          <div className="-ml-px grid h-full flex-1 auto-rows-[74px] grid-cols-[repeat(6,74px)] content-start overflow-hidden">
            {WIDGETS.map(([k, ls, ws], i) => (
              <div key={i} className="flex flex-col items-center pt-[7px]">
                {WI[k]}
                <div className="mt-[7px] flex flex-col items-center leading-[14px]">{ls.map((l, j) => <F key={l} w={ws[j]}>{l}</F>)}</div>
              </div>
            ))}
          </div>
          <VScroll thumb="h-[213px]" />
        </div>
      </div>
      <div className="mt-[5px] flex h-[310px] shrink-0 flex-col overflow-hidden bg-white">
        <Head t="Masters" w={39} />
        <Tools className="border-t border-t-[#f7f7f7]"><T><AddFolder /></T><T><AddNode /></T><T><Up /></T><T><Dn /></T><T><Rt /></T><T><Lt /></T><T><DelNode /></T><T><EditPg /></T><T><Search /></T></Tools>
        <div className="flex h-[269px]">
          <div className="flex-1">
            {MASTERS.map(([lv, t, w, open], i) => (
              <div key={i} className="flex h-[18px] items-center">
                {lv ? <div className="flex w-[61px] pl-[39px]"><Master /></div> : (
                  <div className="flex w-[43px] items-center pl-[7px]">
                    <S w={14} h={10}>{open ? <path d="M8 2v7H1z" fill="#444" stroke="#222" strokeWidth=".6" /> : <path d="M3.5 1v8L8 5z" fill="#fff" stroke="#999" />}</S><Folder />
                  </div>
                )}
                <F w={w} className="mb-px leading-none">{t}</F>
              </div>
            ))}
          </div>
          <VScroll thumb="h-[156px]" />
        </div>
      </div>
    </div>
  );
}

/* ---------- rulers ---------- */
function HRuler() {
  const t = [];
  for (let i = 0; i <= 1145; i += 10) {
    const l = i % 100 === 0 ? 15 : i % 50 === 0 ? 9 : 4;
    t.push(<path key={i} d={`M${14.5 + i} ${17 - l}V17`} stroke={i === 0 ? "#000" : "#555"} />);
    if (l === 15) t.push(<text key={"t" + i} x={i ? 16 + i : 15.5} y={12} fontSize="10" fill="#666" textLength={i === 0 ? 5 : String(i).length * 4.9}>{i}</text>);
  }
  return <S w={1165} h={18} className="bg-[#fafafa]">{t}<path d="M0 17.5h1165" stroke="#555" /></S>;
}
function VRuler() {
  const t = [];
  for (let i = 0; i <= 800; i += 10) {
    const l = i % 100 === 0 ? 14 : i % 50 === 0 ? 9 : 5;
    if (i) t.push(<path key={i} d={`M${14 - l} ${i - 0.5}H14`} stroke="#555" />);
    if (i % 100 === 0) t.push(<text key={"t" + i} transform={`translate(9 ${i + (i ? 17.5 : 8)}) rotate(-90)`} fontSize="10" fill="#666" textLength={i ? 14.5 : 5}>{i}</text>);
  }
  return <S w={15} h={808} className="bg-[#fafafa]">{t}<path d="M14.5 0v808" stroke="#555" /></S>;
}

/* ---------- canvas: x, vertical centre, width, size, text, underline ---------- */
const TEXTS = [
  [548, 173, 159, 13, "Телефон: +7 499 340-94-71"], [753, 173, 36, 13, "Email:"], [794, 173, 116, 13, "info@future-group.ru", 1],
  [547, 210, 85, 18, "Компания"], [658, 210, 57, 18, "Услуги"], [738, 210, 66, 18, "Работы"], [828, 210, 80, 18, "Контакты"], [933, 210, 138, 18, "Личный кабинет"],
  [548, 244, 145, 13, "Техническая поддержка"], [719, 244, 78, 13, "SEO кабинет"], [829, 244, 55, 13, "Финансы"], [914, 244, 62, 13, "Настройки"],
  [523, 295, 48, 13, "Главная", 1], [575, 295, 104, 13, "/ Личный кабинет"],
  [523, 327, 465, 27, "Добро пожаловать в личный кабинет"],
  [523, 374, 117, 15, "Сергей Кулинич ("], [640, 374, 171, 15, "kulini@mir-prekrasnogo.ru", 1], [811, 374, 0, 15, ")"],
  [524, 479, 88, 13, "Редактировать", 1],
  [523, 532, 300, 18, "Выберите страницу по умолчанию"], [547, 572, 145, 13, "Техническая поддержка"], [762, 572, 78, 13, "SEO кабинет"],
  [523, 622, 112, 18, "Оповещение"], [523, 655, 164, 15, "Техническая поддержка"], [547, 684, 203, 13, "Дублировать сообщения на почту"],
  [523, 721, 91, 15, "SEO кабинет"], [547, 752, 171, 13, "Оповещать о падении сайта"],
];
const at = (x, y) => ({ left: x - 514, top: y - 140 });

function Canvas() {
  return (
    <div className="relative h-[791px] flex-1 overflow-hidden bg-white text-black">
      <S w={1133} h={791}>
        <defs><pattern id="dots" width="10" height="10" patternUnits="userSpaceOnUse"><rect x="9" y="9" width="1" height="1" fill="#1010d8" /></pattern></defs>
        <rect x="961" width="172" height="791" fill="url(#dots)" />
        <rect width="960" height="791" fill="#e8f7fe" />
        {Array.from({ length: 12 }, (_, i) => <rect key={i} x={10 + i * 80} width={i === 11 ? 60 : 59} height="791" fill="#e4e4e4" />)}
        <path d="M9.5 -1V130.5H949.5V-1" fill="#fff" stroke="#000" />
        <rect x="809.5" y="13.5" width="120" height="100" fill="#fff" stroke="#000" />
        <path d="M809.5 13.5l120 100M929.5 13.5l-120 100" stroke="#222" strokeWidth=".9" />
        <rect x="843" y="53" width="53" height="20" fill="#fff" />
      </S>
      <span className="absolute flex h-5 w-12 items-center justify-center text-[13px] leading-none" style={at(1358, 193)}><F w={47}>Логотип</F></span>
      {TEXTS.map(([x, y, w, s, t, u], i) => (
        <span key={i} className="absolute flex h-8 items-center" style={at(x, y - (u ? 16 : 17))}>
          <F w={w} className={(u ? "border-b border-black leading-[1] " : "leading-none ") + (s === 27 ? "text-[28px]" : s === 18 ? "text-[18.67px]" : s === 15 ? "text-[15px]" : "text-[13px]")}>{t}</F>
        </span>
      ))}
      <div className="absolute flex w-[301px] flex-col divide-y divide-black border border-black bg-white text-[13px] leading-none" style={at(523, 399)}>
        <div className="flex h-[29px] items-center pb-[2px] pl-[9px]"><span className="w-[60px]"><F w={35}>Логин</F></span><F w={43}>kulinich</F></div>
        <div className="flex h-[30px] items-center pb-[2px] pl-[9px]"><span className="w-[60px]"><F w={44}>Пароль</F></span><F w={55}>3564y6lfs</F></div>
      </div>
      <div className="absolute flex h-[13px] w-[13px] items-center justify-center rounded-full border border-[#777] bg-[#dcdcdc]" style={at(524, 565)}><i className="h-[7px] w-[7px] rounded-full bg-[#5c5c5c]" /></div>
      <div className="absolute h-[13px] w-[13px] rounded-full border border-[#777] bg-[#cfcfcf]" style={at(739, 565)} />
      <div className="absolute flex h-[13px] w-[13px] items-center justify-center rounded-[2px] border border-[#666] bg-[#f6f6f6]" style={at(524, 677)}><S w={11} h={11}><path d="M2 5l2.5 3L9 2.5" stroke="#555" strokeWidth="1.9" /></S></div>
      <div className="absolute h-[13px] w-[13px] rounded-[2px] border border-[#666] bg-[#f6f6f6]" style={at(524, 745)} />
      <div className="absolute flex h-[46px] w-[141px] items-center justify-center rounded-[4px] border border-[#6b6b6b] bg-gradient-to-b from-white via-[#f1f1f1] to-[#e2e2e2] text-[13px]" style={at(523, 785)}><F w={63}>Сохранить</F></div>
    </div>
  );
}

const Tab = ({ t, w, on, className, gap }) => (
  <div className={"flex items-center rounded-t-[5px] border border-b-0 border-[#8a8a8a] text-[11px] leading-none " + (on ? "-mb-px h-[19px] bg-[#fafafa] pb-[2px] font-bold text-black " : "mb-px h-[17px] bg-gradient-to-b from-[#e4e4e4] to-[#cfcfcf] text-[#6c6c6c] ") + className}>
    <F w={w}>{t}</F><span className={gap}><CloseX /></span>
  </div>
);
const Seg = ({ on, className, children }) => (
  <div className={"flex items-center justify-center " + (on ? "bg-gradient-to-b from-[#a3d3f6] to-[#85b7de] " : "bg-gradient-to-b from-[#f8f8f8] to-[#d6d6d6] ") + className}>{children}</div>
);

function Center() {
  return (
    <div className="flex w-[1165px] shrink-0 flex-col bg-[#cfcfcf]">
      <div className="flex h-[21px] shrink-0 items-end border-b border-[#8a8a8a] bg-white">
        <div className="mb-px flex h-[17px] w-[20px] items-center justify-center rounded-t-[5px] border border-b-0 border-[#8a8a8a] bg-[#dedede]"><Down w={7} c="#000" /></div>
        <Tab t="Обсуждение задачи" w={102} className="w-[143px] pl-[10px]" gap="ml-[15px]" />
        <Tab t="Техническая поддержка" w={122} className="w-[169px] pl-[12px]" gap="ml-[18px]" />
        <Tab t="Настройки" w={57} on className="w-[99px] pl-[9px]" gap="ml-[17px]" />
        <Tab t="Финансы" w={46} className="w-[101px] pl-[16px]" gap="ml-[22px]" />
      </div>
      <HRuler />
      <div className="flex h-[808px] shrink-0">
        <VRuler />
        <div className="flex flex-1 flex-col">
          <div className="flex">
            <Canvas />
            <VScroll className="h-[791px]" thumb="h-[29px]" />
          </div>
          <div className="flex h-[17px] items-center bg-[#ececec] pl-[5px]">
            <S w={5} h={8}><path d="M4.5 0v8L0 4z" fill="#777" /></S>
            <div className="ml-[7px] flex h-[15px] w-[61px] items-center justify-center gap-[1px] rounded-[2px] border border-[#959595] bg-gradient-to-b from-[#fbfbfb] to-[#cfcfcf]">{[0, 1, 2].map((i) => <i key={i} className="h-[7px] w-[2px] bg-[#777]" />)}</div>
            <S w={5} h={8} className="ml-auto mr-[24px]"><path d="M.5 0v8L5 4z" fill="#777" /></S>
          </div>
        </div>
      </div>
      <div className="flex h-[5px] shrink-0 justify-center"><div className="flex h-[5px] w-[100px] justify-center bg-[#777]"><S w={6} h={5}><path d="M0 0h6L3 4z" fill="#fff" /></S></div></div>
      <div className="flex flex-1 flex-col bg-[#f0f0f0] text-[11px] text-black">
        <div className="relative flex h-[26px] shrink-0 items-start justify-center pt-[6px]">
          <i className="absolute inset-x-0 top-[14px] h-[2px] border-t border-[#8f8f8f] bg-[#d0d0d0]" />
          <div className="relative flex h-[18px] divide-x divide-[#6e6e6e] overflow-hidden rounded-[3px] border border-[#6e6e6e] leading-none">
            <Seg on className="w-[78px] pb-px"><F w={55}>Page Notes</F></Seg><Seg className="w-[107px] pb-px"><F w={83}>Page Interactions</F></Seg><Seg className="w-[100px] pb-px"><F w={77}>Page Formatting</F></Seg>
          </div>
          <div className="absolute right-[4px] top-[2px] flex gap-[7px]"><PopOut /><CloseX /></div>
        </div>
        <div className="mt-[4px] flex items-center pl-[10px] leading-none">
          <div className="flex h-[18px] w-[157px] items-center justify-between rounded-[3px] border border-[#707070] bg-gradient-to-b from-[#f6f6f6] to-[#cdcdcd] pl-[7px] pr-[3px]"><F w={35}>Default</F><Down w={7} c="#000" /></div>
          <F w={78} className="ml-[5px] text-[#0000ee]">Manage Notes...</F>
        </div>
        <div className="ml-[5px] mr-[5px] mt-[7px] flex h-[26px] justify-end border border-[#e3e9ef] border-t-[#abadb3] bg-white p-[1px]"><div className="flex w-[17px] flex-col items-center justify-between bg-[#f2f2f2] py-[4px]"><Tri up /><Tri /></div></div>
      </div>
    </div>
  );
}

function Right() {
  return (
    <div className="flex flex-1 flex-col bg-[#f0f0f0] text-[11px] leading-[18px]">
      <div className="flex h-[467px] shrink-0 flex-col">
        <Head t="Widget Properties" w={85} />
        <div className="flex flex-col px-[5px] pt-[4px]"><F w={30} className="self-start text-[#a3a3a3]">Label</F><div className="mt-px h-[20px] border border-[#b3b3b3] bg-[#f4f4f4]" /></div>
        <div className="relative mt-[7px] flex h-[20px] justify-center">
          <i className="absolute inset-x-0 top-[9px] h-[2px] border-t border-[#8f8f8f] bg-[#dadada]" />
          <div className="relative flex h-[19px] divide-x divide-[#6e6e6e] overflow-hidden rounded-[4px] border border-[#6e6e6e]">
            <Seg className="w-[29px]"><S w={13} h={12}><path d="M1.5 .5h7.5l2.5 2.5v8.5h-10z" fill="#fff" stroke="#555" /><path d="M3 4h6M3 6h7M3 8h7M3 10h5" stroke="#333" strokeWidth=".9" /></S></Seg>
            <Seg on className="w-[29px]"><S w={12} h={13}><path d="M5 0h5L7.5 4H11L3 13l1.8-5.5H1.5z" fill="#444" /></S></Seg>
            <Seg className="w-[28px]"><b className="font-['Liberation_Serif',serif] text-[15px] leading-none text-[#333]">T</b><S w={7} h={9} className="mt-1"><path d="M0 4h3v3H0zM3.5 1h3.5v3H3.5z" fill="#888" /><path d="M3.5 5h3v3h-3z" stroke="#999" /></S></Seg>
          </div>
        </div>
        <div className="mt-[3px] flex justify-center text-[#6b6b6b]"><F w={56}>Interactions</F></div>
        <div className="mt-[6px] flex gap-[7px] pl-[10px] text-[#8a8a8a]"><F w={56}>Add Case...</F><F w={58}>Quick Link...</F></div>
      </div>
      <div className="h-[5px] shrink-0 bg-[#cfcfcf]" />
      <Head t="Dynamic Panel Manager" w={115} />
      <Tools className="border-t border-t-[#f7f7f7]"><T dis><EditPg /></T><T dis><AddNode /></T><T dis><Up /></T><T dis><Dn /></T><T dis><DelNode /></T><T dis><EditPg /></T><T><Master /></T></Tools>
      <div className="flex h-[18px] items-center pl-[5px] font-bold leading-none text-black"><Page /><F w={57} className="mb-px ml-[8px]">Настройки</F></div>
    </div>
  );
}

const Split = ({ dir }) => (
  <div className="flex w-[5px] shrink-0 flex-col bg-[#cfcfcf] pt-[420px]"><div className="flex h-[100px] items-center bg-[#777]"><S w={5} h={6}><path d={dir === "l" ? "M4.5 0v6L1 3z" : "M.5 0v6L4 3z"} fill="#fff" /></S></div></div>
);

const MENU = [["File", 18, "w-[30px]"], ["Edit", 20, "w-[32px]"], ["View", 25, "w-[37px]"], ["Wireframe", 55, "w-[67px]"], ["Object", 35, "w-[47px]"], ["Generate", 47, "w-[59px]"], ["Share", 29, "w-[41px]"], ["Help", 25, "w-[40px]"]];

export default function App() {
  return (
    <div className="flex h-[1040px] w-[1920px] flex-col overflow-hidden bg-[#cfcfcf] font-['Liberation_Sans',Arial,sans-serif] leading-normal">
      <Defs />
      <div className="flex h-[21px] shrink-0 items-center bg-[linear-gradient(90deg,#cfe0f1_0,#d9e6f3_330px,#b1cfeb_365px,#b1cfeb_1400px,#bdd6ee_100%)] font-['Open_Sans','Noto_Sans',sans-serif] text-[12px] text-black">
        <S w={16} h={18}><path d="M5 11C4 6 2 5 0 4 3 1 7 3 8 6c1-3 3-4 7-5-1 6-4 9-8 10z" fill="#4e9c28" /><path d="M8 6c1-3 3-4 7-5-1 6-4 9-8 10z" fill="#76b83c" /><circle cx="4" cy="14" r="3" fill="#d7ecf7" stroke="#2d93c6" strokeWidth="2" /><path d="M8 10v7h4" stroke="#2d93c6" strokeWidth="2" /></S>
        <F w={333} className="ml-[5px] leading-none">future_personal_support - Axure RP Pro 6.5 : Licensed to BEAN</F>
        <div className="ml-auto mr-[3px] flex h-[18px] w-[103px] self-start overflow-hidden rounded-b-[4px] border border-t-0 border-[#4c5a6b] shadow-[0_0_1px_1px_#e4eef8]">
          <div className="flex w-[28px] items-center justify-center border-r border-[#5b6878] bg-[linear-gradient(#d3dde8_0_45%,#a3b4c6_50%,#b9cadb)]"><i className="mt-[3px] h-[5px] w-[12px] rounded-[1px] border border-[#5b6474] bg-white" /></div>
          <div className="flex w-[27px] items-center justify-center border-r border-[#5b6878] bg-[linear-gradient(#d3dde8_0_45%,#a3b4c6_50%,#b9cadb)]"><S w={13} h={13}><path d="M3.5 1h8.5v8.5H3.5z" fill="#fff" stroke="#5b6474" /><path d="M1 3.5h8.5V12H1z" fill="#fff" stroke="#5b6474" /><path d="M4 6.5h2.5V9H4z" fill="#a9bccf" stroke="#5b6474" /></S></div>
          <div className="flex flex-1 items-center justify-center bg-[linear-gradient(#e0a196_0_40%,#c24631_50%,#d2583d)]"><S w={13} h={11}><path d="M3 2l7 7M10 2l-7 7" stroke="#5b4a52" strokeWidth="4.4" /><path d="M3 2l7 7M10 2l-7 7" stroke="#fff" strokeWidth="2.4" /></S></div>
        </div>
      </div>
      <div className="flex h-[23px] shrink-0 items-center border-t border-[#5f6b78] bg-gradient-to-b from-[#e8e8e8] to-[#cfcfcf] pl-[6px] font-['Open_Sans','Noto_Sans',sans-serif] text-[12px] leading-none text-black">
        {MENU.map(([t, w, c]) => <div key={t} className={c}><F w={w}>{t}</F></div>)}
      </div>
      <Toolbars />
      <div className="flex h-[939px] shrink-0 items-stretch">
        <Left />
        <Split dir="l" />
        <Center />
        <Split dir="r" />
        <Right />
      </div>
    </div>
  );
}
